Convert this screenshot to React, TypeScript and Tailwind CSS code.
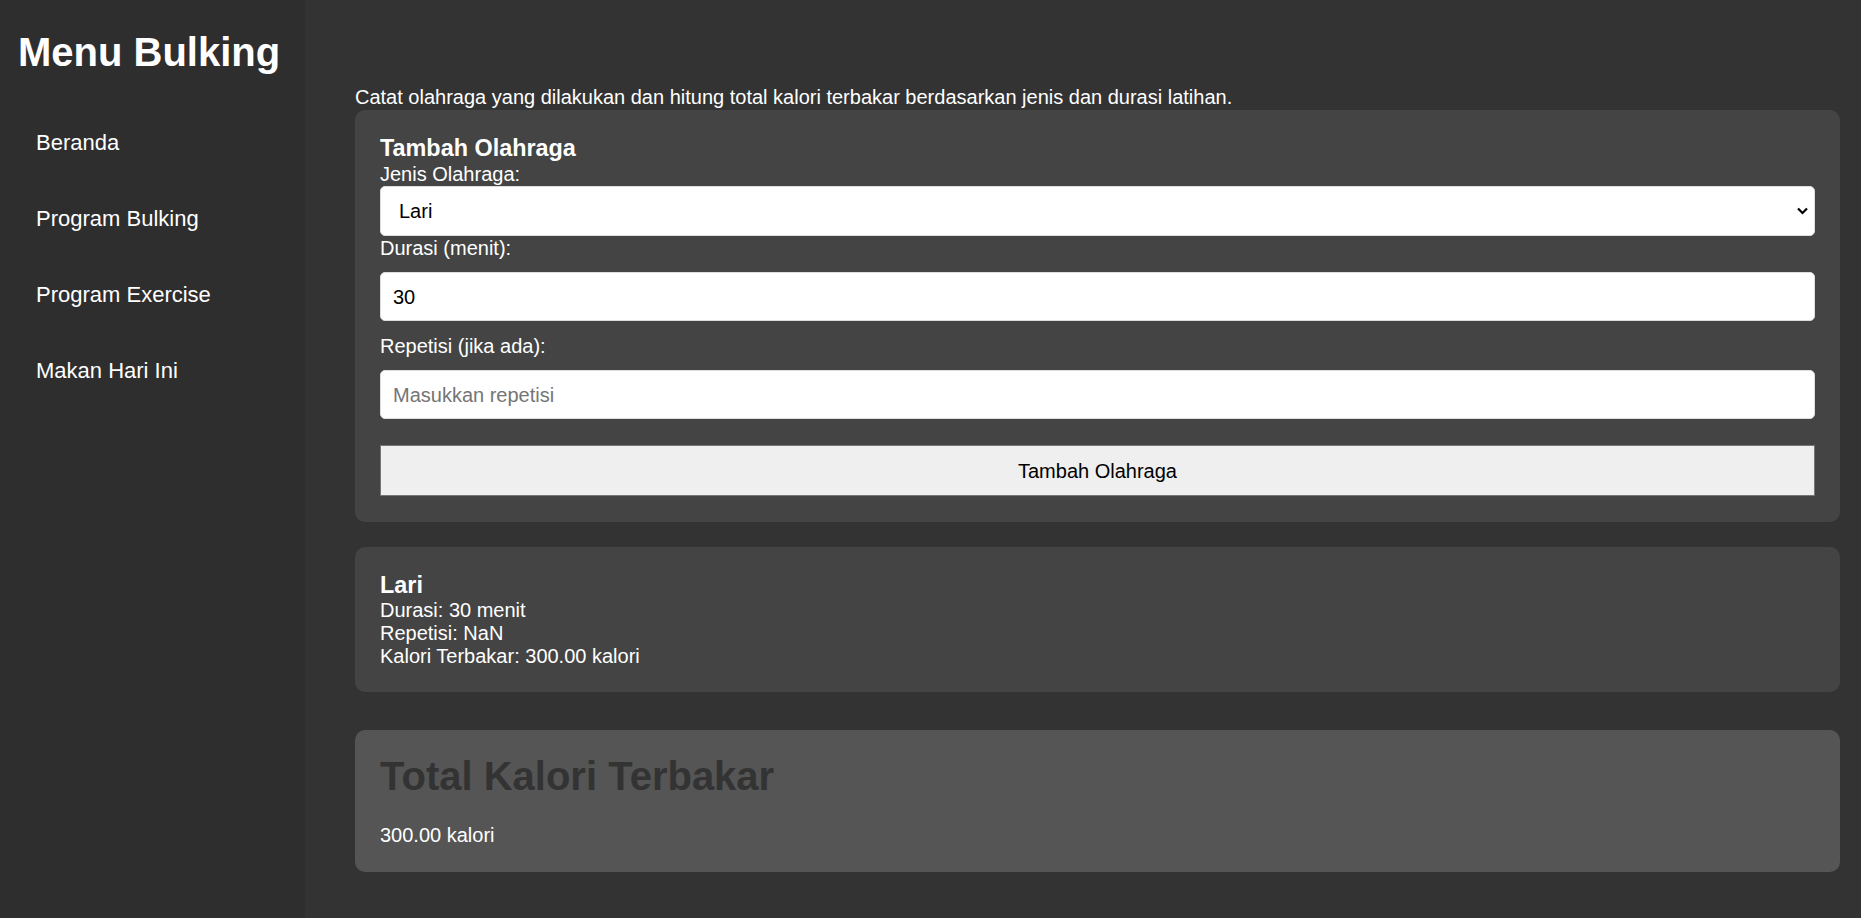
import React from "react";

export default function App() {
  const nav = ["Beranda", "Program Bulking", "Program Exercise", "Makan Hari Ini"];
  return (
    <div
      className="flex h-[918px] w-full bg-[#333333] text-white"
      style={{ fontFamily: '"Liberation Sans", Arial, sans-serif' }}
    >
      <aside className="w-[305px] shrink-0 bg-[#2e2e2e] pt-[29px]">
        <h1 className="pl-[18px] text-[40px] font-bold leading-[46px]">Menu Bulking</h1>
        <nav className="mt-[30px] flex flex-col">
          {nav.map((n) => (
            <div key={n} className="py-[25px] pl-[36px] text-[22px] leading-[26px]">
              {n}
            </div>
          ))}
        </nav>
      </aside>
      <main className="flex-1 pl-[50px] pr-[21px] pt-[86px]">
        <p className="text-[20px] leading-[23px]">
          Catat olahraga yang dilakukan dan hitung total kalori terbakar berdasarkan jenis dan durasi latihan.
        </p>
        <section className="mt-[1px] flex flex-col rounded-[10px] bg-[#444444] px-[25px] pb-[26px] pt-[25px]">
          <h3 className="text-[23.4px] font-bold leading-[27px]">Tambah Olahraga</h3>
          <label className="mt-[1px] text-[20px] leading-[23px]">Jenis Olahraga:</label>
          <div className="flex h-[50px] items-center justify-between rounded-[5px] border border-[#dddddd] bg-white pl-[18px] pr-[6px] text-[20px] text-black">
            <span>Lari</span>
            <svg width="11" height="8" viewBox="0 0 11 8" fill="none">
              <path d="M1 1.5L5.5 6L10 1.5" stroke="#000" strokeWidth="2.2" />
            </svg>
          </div>
          <label className="mt-[1px] text-[20px] leading-[23px]">Durasi (menit):</label>
          <div className="mt-[12px] flex h-[49px] items-center rounded-[5px] border border-[#dddddd] bg-white pl-[12px] text-[20px] text-black">
            30
          </div>
          <label className="mt-[14px] text-[20px] leading-[23px]">Repetisi (jika ada):</label>
          <div className="mt-[12px] flex h-[49px] items-center rounded-[5px] border border-[#dddddd] bg-white pl-[12px] text-[20px] text-[#757575]">
            Masukkan repetisi
          </div>
          <div className="mt-[26px] flex h-[51px] items-center justify-center border border-[#767676] bg-[#efefef] text-[20px] text-black">
            Tambah Olahraga
          </div>
        </section>
        <section className="mt-[25px] flex flex-col rounded-[10px] bg-[#444444] px-[25px] pb-[24px] pt-[25px]">
          <h3 className="text-[23.4px] font-bold leading-[27px]">Lari</h3>
          <div className="text-[20px] leading-[23px]">Durasi: 30 menit</div>
          <div className="text-[20px] leading-[23px]">Repetisi: NaN</div>
          <div className="text-[20px] leading-[23px]">Kalori Terbakar: 300.00 kalori</div>
        </section>
        <section className="mt-[38px] flex flex-col rounded-[10px] bg-[#555555] px-[25px] pb-[25px] pt-[23px]">
          <h2 className="text-[40px] font-bold leading-[46px] text-[#333333]">Total Kalori Terbakar</h2>
          <div className="mt-[25px] text-[20px] leading-[23px]">300.00 kalori</div>
        </section>
      </main>
    </div>
  );
}
